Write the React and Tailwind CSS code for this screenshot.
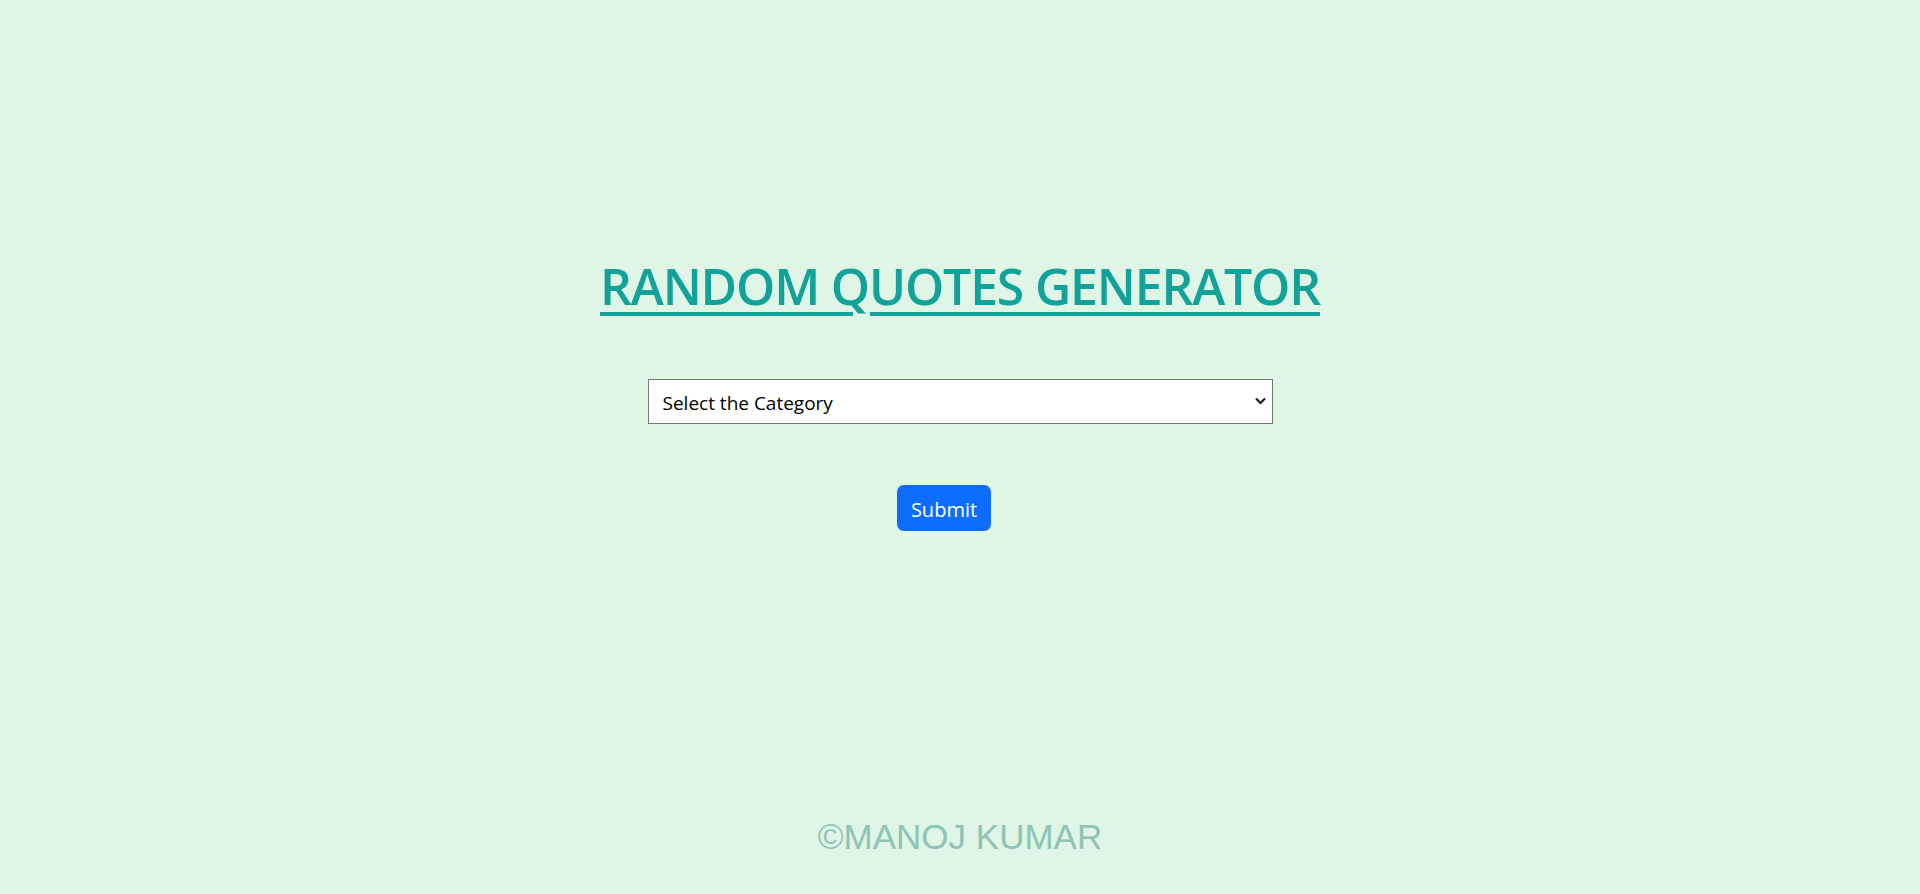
import React, { useState } from "react";

const categories = ["love", "life", "inspirational", "happiness", "success", "friendship"];

const App = () => {
  const [category, setCategory] = useState("");

  return (
    <div className="h-[894px] bg-[#dff5e6] flex flex-col items-center font-['Open_Sans',sans-serif]">
      <h1 className="mt-[256px] text-[50px] leading-[1.2] font-semibold tracking-[-1.2px] text-[#12a29a] underline decoration-[4px] underline-offset-[7px]">
        RANDOM QUOTES GENERATOR
      </h1>

      <div className="relative mt-[63px]">
        <select
          value={category}
          onChange={(e) => setCategory(e.target.value)}
          className="appearance-none w-[625px] h-[45px] pl-[14px] pr-10 pt-[3px] bg-white border border-[#767676] text-[19px] text-black outline-none"
        >
          <option value="">Select the Category</option>
          {categories.map((c) => (
            <option key={c} value={c}>
              {c}
            </option>
          ))}
        </select>
        <svg
          className="absolute right-[7px] top-[18px] pointer-events-none"
          width="11"
          height="8"
          viewBox="0 0 11 8"
          fill="none"
        >
          <path d="M1 1.5 L5.5 6 L10 1.5" stroke="#111" strokeWidth="2" />
        </svg>
      </div>

      <button className="mt-[61px] mr-[32px] w-[94px] h-[46px] pt-[3px] rounded-[7px] bg-[#0d6efd] text-white text-[20px] leading-none">
        Submit
      </button>

      <footer className="mt-auto mb-[36px] text-[35px] leading-[1.2] text-[#8ec4b3] font-['Liberation_Sans',Arial,sans-serif]">
        ©MANOJ KUMAR
      </footer>
    </div>
  );
};

export default App;
